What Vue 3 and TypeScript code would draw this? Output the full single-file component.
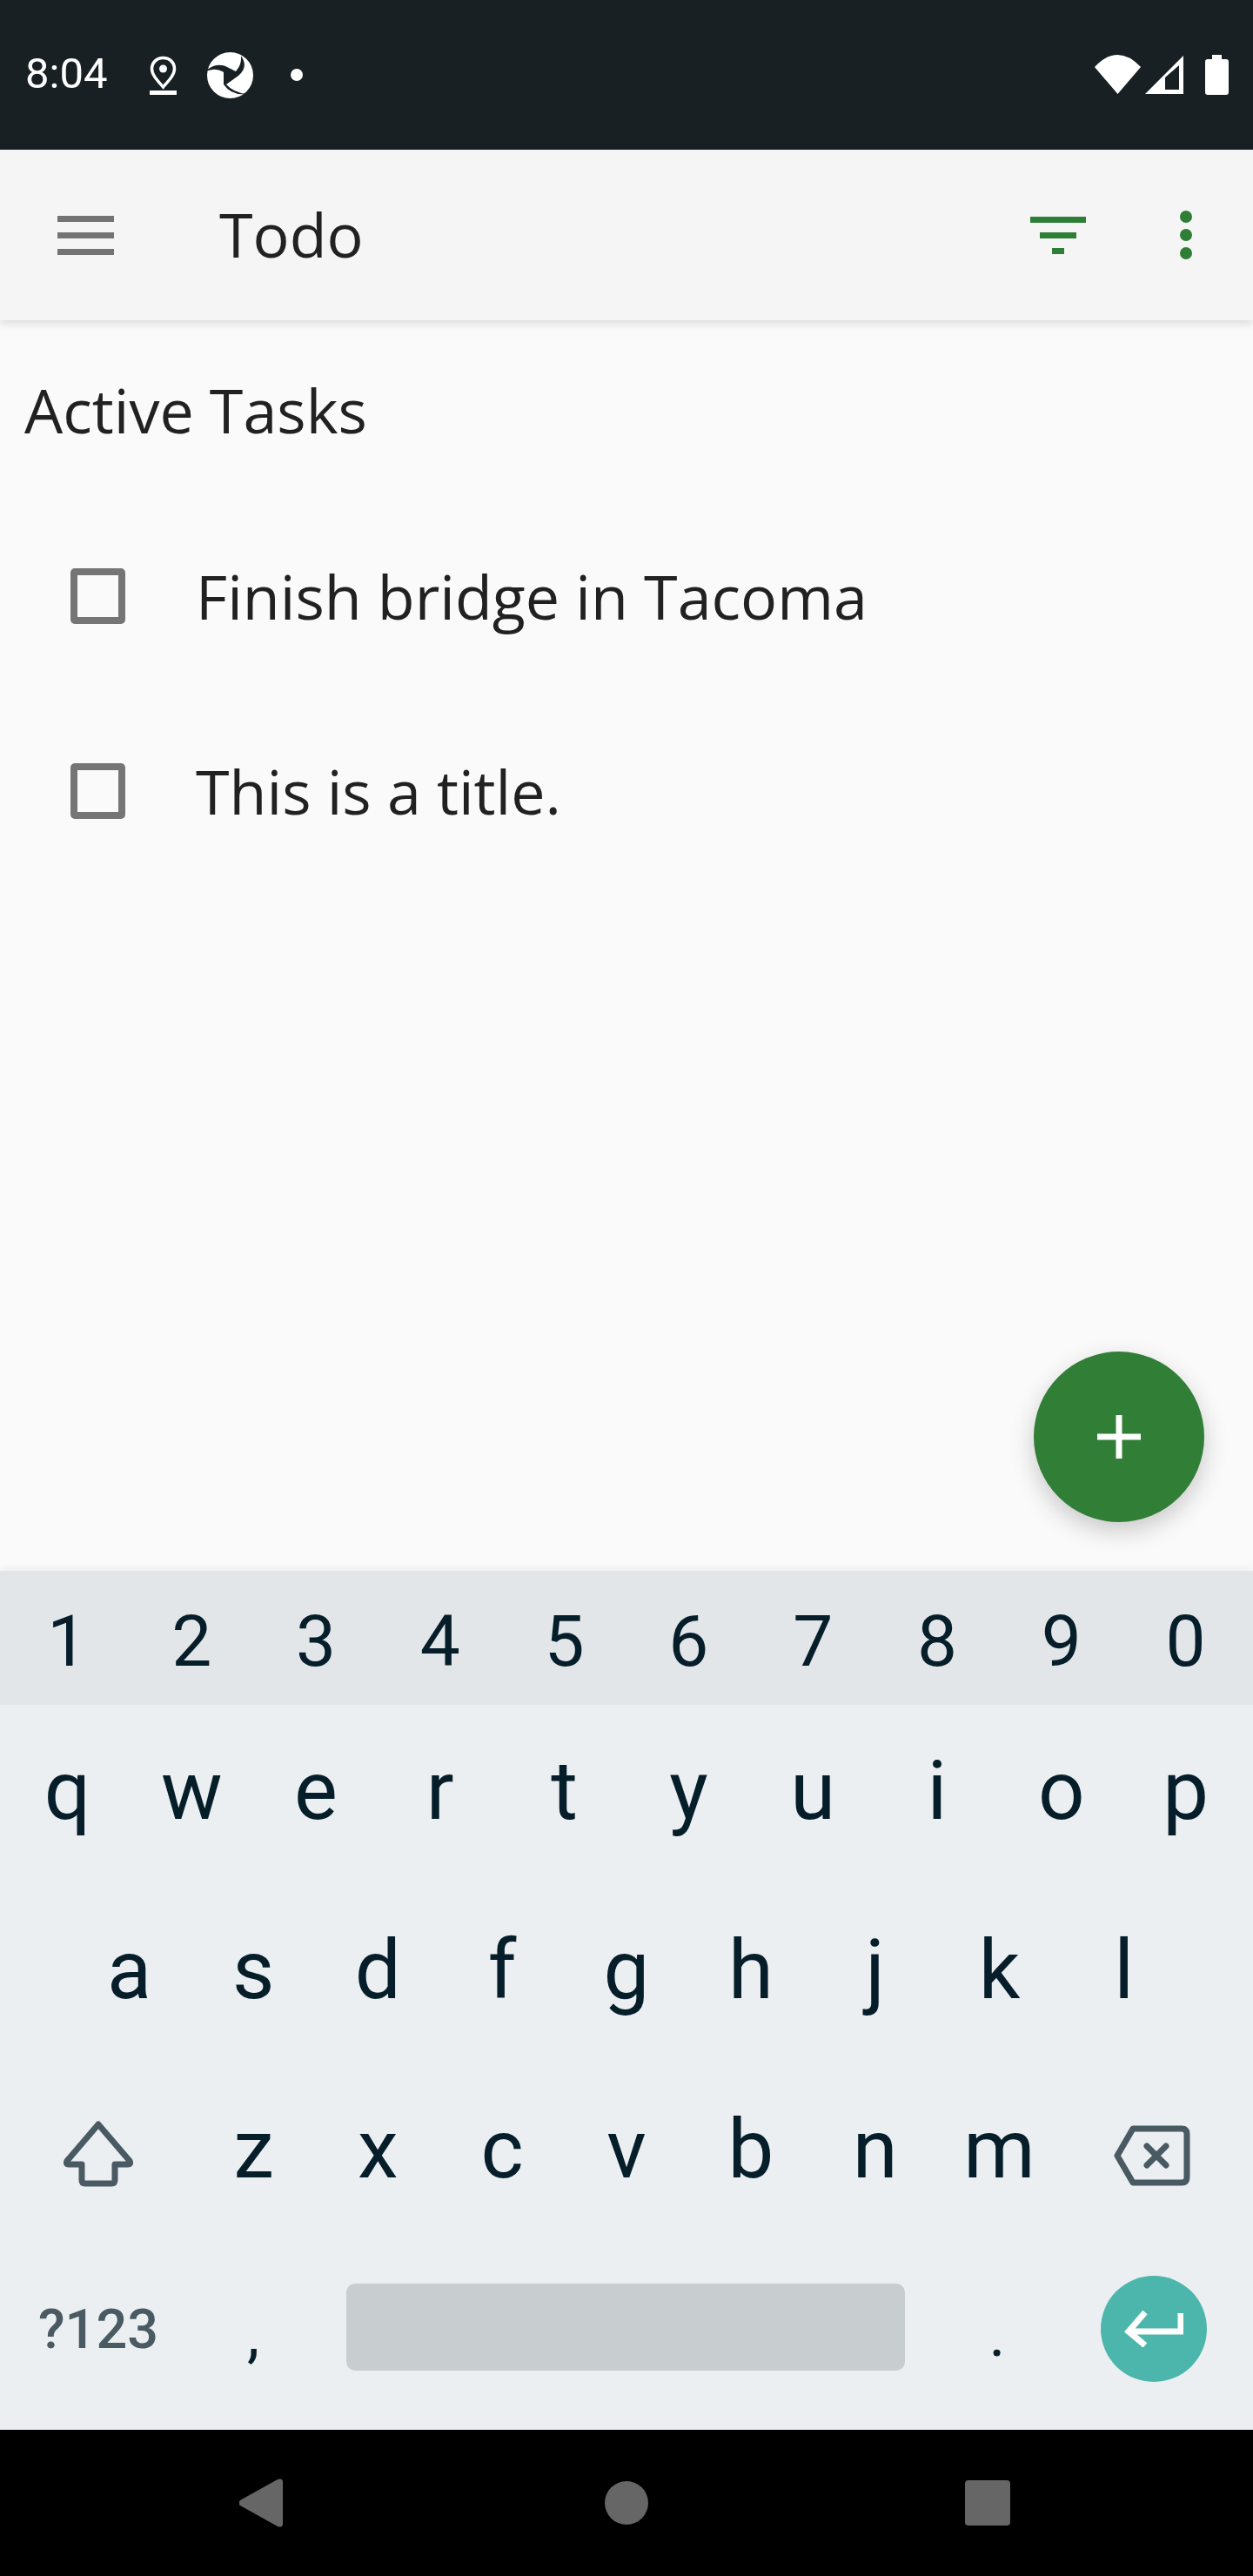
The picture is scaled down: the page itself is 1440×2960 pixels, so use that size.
<script setup lang="ts">
const digits = ['1', '2', '3', '4', '5', '6', '7', '8', '9', '0']
const rowOne = ['q', 'w', 'e', 'r', 't', 'y', 'u', 'i', 'o', 'p']
const rowTwo = ['a', 's', 'd', 'f', 'g', 'h', 'j', 'k', 'l']
const rowThree = ['z', 'x', 'c', 'v', 'b', 'n', 'm']
const tasks = ['Finish bridge in Tacoma', 'This is a title.']
</script>

<template>
  <div class="phone">
    <header class="status-bar">
      <span class="time">8:04</span>
      <svg class="pin" width="31" height="45" viewBox="0 0 31 45">
        <path d="M15.500 2.500C8 2.500 2.500 8 2.500 15c0 7 6 13 13 21 7-8 13-14 13-21 0-7-5.500-12.500-13-12.500z" fill="none" stroke="#fff" stroke-width="3.500" />
        <circle cx="15.500" cy="15" r="4.500" fill="#fff" />
        <rect x="0" y="40" width="31" height="5" fill="#fff" />
      </svg>
      <svg class="logo" width="53" height="53" viewBox="0 0 53 53">
        <circle cx="26.500" cy="26.500" r="26.500" fill="#fff" />
        <path d="M-1 21Q10 12 21 16L33 22Q40 14 39 4Q48 17 36 27L22 37Q30 46 45 48Q28 50 19 37L19 23Q10 17 -1 22z" fill="#182024" />
      </svg>
      <span class="dot"></span>
      <span class="spacer"></span>
      <svg class="wifi" width="53" height="45" viewBox="0 0 53 45">
        <path d="M0 14Q26.500 -14 53 14L26.500 45z" fill="#fff" />
      </svg>
      <svg class="signal" width="44" height="44" viewBox="0 0 44 44">
        <path fill-rule="evenodd" d="M44 0V44H0zM39 11L23 25V39H39z" fill="#fff" />
      </svg>
      <svg class="battery" width="27" height="46" viewBox="0 0 27 46">
        <path d="M8 0H19V5H24Q27 5 27 8V43Q27 46 24 46H3Q0 46 0 43V8Q0 5 3 5H8z" fill="#fff" />
      </svg>
    </header>

    <div class="app-bar">
      <div class="menu-icon"><span></span><span></span><span></span></div>
      <span class="app-title">Todo</span>
      <span class="spacer"></span>
      <div class="filter-icon"><span class="wide"></span><span class="mid"></span><span class="small"></span></div>
      <div class="more-icon"><span></span><span></span><span></span></div>
    </div>

    <main class="content">
      <h2 class="section">Active Tasks</h2>
      <div v-for="task in tasks" :key="task" class="task">
        <span class="checkbox"></span>
        <span class="task-title">{{ task }}</span>
      </div>
      <button class="fab" aria-label="Add">
        <svg width="50" height="50" viewBox="0 0 50 50">
          <path d="M21.500 0h7v21.500H50v7H28.500V50h-7V28.500H0v-7h21.500z" fill="#fff" />
        </svg>
      </button>
    </main>

    <section class="keyboard">
      <div class="digit-row">
        <span v-for="d in digits" :key="d" class="key">{{ d }}</span>
      </div>
      <div class="row">
        <span v-for="k in rowOne" :key="k" class="key">{{ k }}</span>
      </div>
      <div class="row inset">
        <span v-for="k in rowTwo" :key="k" class="key">{{ k }}</span>
      </div>
      <div class="row">
        <span class="side-key">
          <svg class="shift" width="80" height="76" viewBox="0 0 80 76">
            <path d="M40 4L4 46Q2 50 6 50H21V68Q21 72 25 72H55Q59 72 59 68V50H74Q78 50 76 46z" fill="none" stroke="#4a5a62" stroke-width="7" stroke-linejoin="round" />
          </svg>
        </span>
        <span v-for="k in rowThree" :key="k" class="key">{{ k }}</span>
        <span class="side-key">
          <svg class="backspace" width="88" height="70" viewBox="0 0 88 70">
            <path d="M22 4H78Q84 4 84 10V60Q84 66 78 66H22L4 35z" fill="none" stroke="#4a5a62" stroke-width="7" stroke-linejoin="round" />
            <path d="M38 24L60 46M60 24L38 46" fill="none" stroke="#4a5a62" stroke-width="7" stroke-linecap="round" />
          </svg>
        </span>
      </div>
      <div class="bottom-row">
        <span class="symbols">?123</span>
        <span class="punct">,</span>
        <span class="space-bar"></span>
        <span class="punct">.</span>
        <span class="enter-key">
          <span class="enter">
            <svg width="68" height="42" viewBox="0 0 68 42">
              <path d="M65 3V24H5M24 2L5 24L24 40" fill="none" stroke="#fff" stroke-width="7" />
            </svg>
          </span>
        </span>
      </div>
    </section>

    <nav class="nav-bar">
      <svg width="50" height="56" viewBox="0 0 50 56">
        <path d="M1 25L44 1Q50 -1 50 4V52Q50 57 44 55L1 31Q-2 28 1 25z" fill="#666" />
      </svg>
      <span class="nav-circle"></span>
      <span class="nav-square"></span>
    </nav>
  </div>
</template>

<style scoped>
.phone {
  width: 1440px;
  height: 2960px;
  display: flex;
  flex-direction: column;
  overflow: hidden;
  background: #fafafa;
  font-family: "Open Sans", sans-serif;
}

.spacer {
  flex: 1;
}

/* --- STATUS BAR --- */
.status-bar {
  height: 172px;
  flex: none;
  display: flex;
  align-items: flex-start;
  padding: 60px 28px 0 29px;
  box-sizing: border-box;
  background: #182024;
}

.time {
  width: 143px;
  margin-top: -3px;
  color: #fff;
  font-family: Roboto, sans-serif;
  font-size: 49px;
  line-height: 56px;
}

.pin {
  margin-top: 4px;
}

.logo {
  margin-left: 35px;
}

.dot {
  width: 14px;
  height: 14px;
  margin: 19px 0 0 43px;
  border-radius: 50%;
  background: #fff;
}

.wifi {
  margin-top: 3px;
}

.signal {
  margin: 4px 0 0 5px;
}

.battery {
  margin: 3px 0 0 25px;
}

/* --- APP BAR --- */
.app-bar {
  height: 196px;
  flex: none;
  display: flex;
  align-items: center;
  position: relative;
  z-index: 2;
  background: #f5f5f5;
  box-shadow: 0 3px 10px rgba(0, 0, 0, 0.14);
}

.menu-icon {
  width: 65px;
  margin-left: 66px;
  display: flex;
  flex-direction: column;
  gap: 12px;
}

.menu-icon span {
  height: 7px;
  background: #737373;
}

.app-title {
  margin: -2px 0 0 121px;
  color: #212121;
  font-size: 70px;
}

.filter-icon {
  width: 64px;
  display: flex;
  flex-direction: column;
  align-items: center;
  gap: 11px;
}

.filter-icon span {
  height: 7px;
  background: #2f7e35;
}

.filter-icon .wide { width: 64px; }
.filter-icon .mid { width: 42px; }
.filter-icon .small { width: 14px; }

.more-icon {
  margin: 0 70px 0 108px;
  display: flex;
  flex-direction: column;
  gap: 7px;
}

.more-icon span {
  width: 14px;
  height: 14px;
  border-radius: 50%;
  background: #2f7e35;
}

/* --- TASK LIST --- */
.content {
  flex: 1;
  position: relative;
  min-height: 0;
}

.section {
  margin: 0;
  padding: 57px 0 56px 28px;
  color: #212121;
  font-size: 70px;
  font-weight: 400;
  line-height: 92px;
}

.task {
  height: 224px;
  display: flex;
  align-items: center;
}

.checkbox {
  width: 63px;
  height: 64px;
  margin-left: 81px;
  box-sizing: border-box;
  border: 8px solid #757575;
  border-radius: 5px;
}

.task-title {
  margin-left: 81px;
  color: #212121;
  font-size: 70px;
}

.fab {
  position: absolute;
  left: 1188px;
  top: 1185px;
  width: 196px;
  height: 196px;
  padding: 0;
  border: 0;
  border-radius: 50%;
  display: flex;
  align-items: center;
  justify-content: center;
  background: #317e36;
  box-shadow: 0 10px 28px rgba(0, 0, 0, 0.2);
}

/* --- KEYBOARD --- */
.keyboard {
  height: 987px;
  flex: none;
  position: relative;
  background: #ebeff2;
  color: #061e2a;
  font-family: Roboto, sans-serif;
  box-shadow: 0 -3px 10px rgba(0, 0, 0, 0.05);
}

.digit-row {
  height: 154px;
  padding: 8px 6px 0;
  box-sizing: border-box;
  display: flex;
  align-items: center;
  background: #e2e6e9;
  font-size: 82px;
}

.row {
  height: 206px;
  padding: 0 6px 8px;
  box-sizing: border-box;
  display: flex;
  align-items: center;
  font-size: 94px;
}

.row.inset {
  padding-left: 77px;
  padding-right: 77px;
}

.key {
  flex: 1;
  text-align: center;
}

.side-key {
  flex: 1.5;
  display: flex;
  align-items: center;
  justify-content: center;
}

.shift {
  margin-top: 10px;
}

.backspace {
  margin: 14px 6px 0 0;
}

.bottom-row {
  height: 215px;
  padding: 0 6px 22px;
  box-sizing: border-box;
  display: flex;
  align-items: center;
}

.symbols {
  width: 214px;
  flex: none;
  padding-top: 6px;
  text-align: center;
  color: #4a5a62;
  font-size: 63px;
  font-weight: 500;
}

.punct {
  width: 142px;
  flex: none;
  padding-top: 17px;
  text-align: center;
  font-size: 72px;
}

.space-bar {
  width: 642px;
  height: 100px;
  margin: 0 35px 0 36px;
  flex: none;
  border-radius: 10px;
  background: #c8cdd0;
}

.enter-key {
  flex: 1;
  display: flex;
  justify-content: center;
}

.enter {
  width: 122px;
  height: 122px;
  margin-top: 5px;
  border-radius: 50%;
  display: flex;
  align-items: center;
  justify-content: center;
  background: #4db6ac;
}

/* --- NAV --- */
.nav-bar {
  height: 168px;
  flex: none;
  position: relative;
  z-index: 1;
  display: flex;
  align-items: center;
  padding-left: 275px;
  box-sizing: border-box;
  background: #000;
}

.nav-circle {
  width: 50px;
  height: 50px;
  margin-left: 370px;
  border-radius: 50%;
  background: #666;
}

.nav-square {
  width: 52px;
  height: 52px;
  margin-left: 364px;
  border-radius: 4px;
  background: #666;
}
</style>
